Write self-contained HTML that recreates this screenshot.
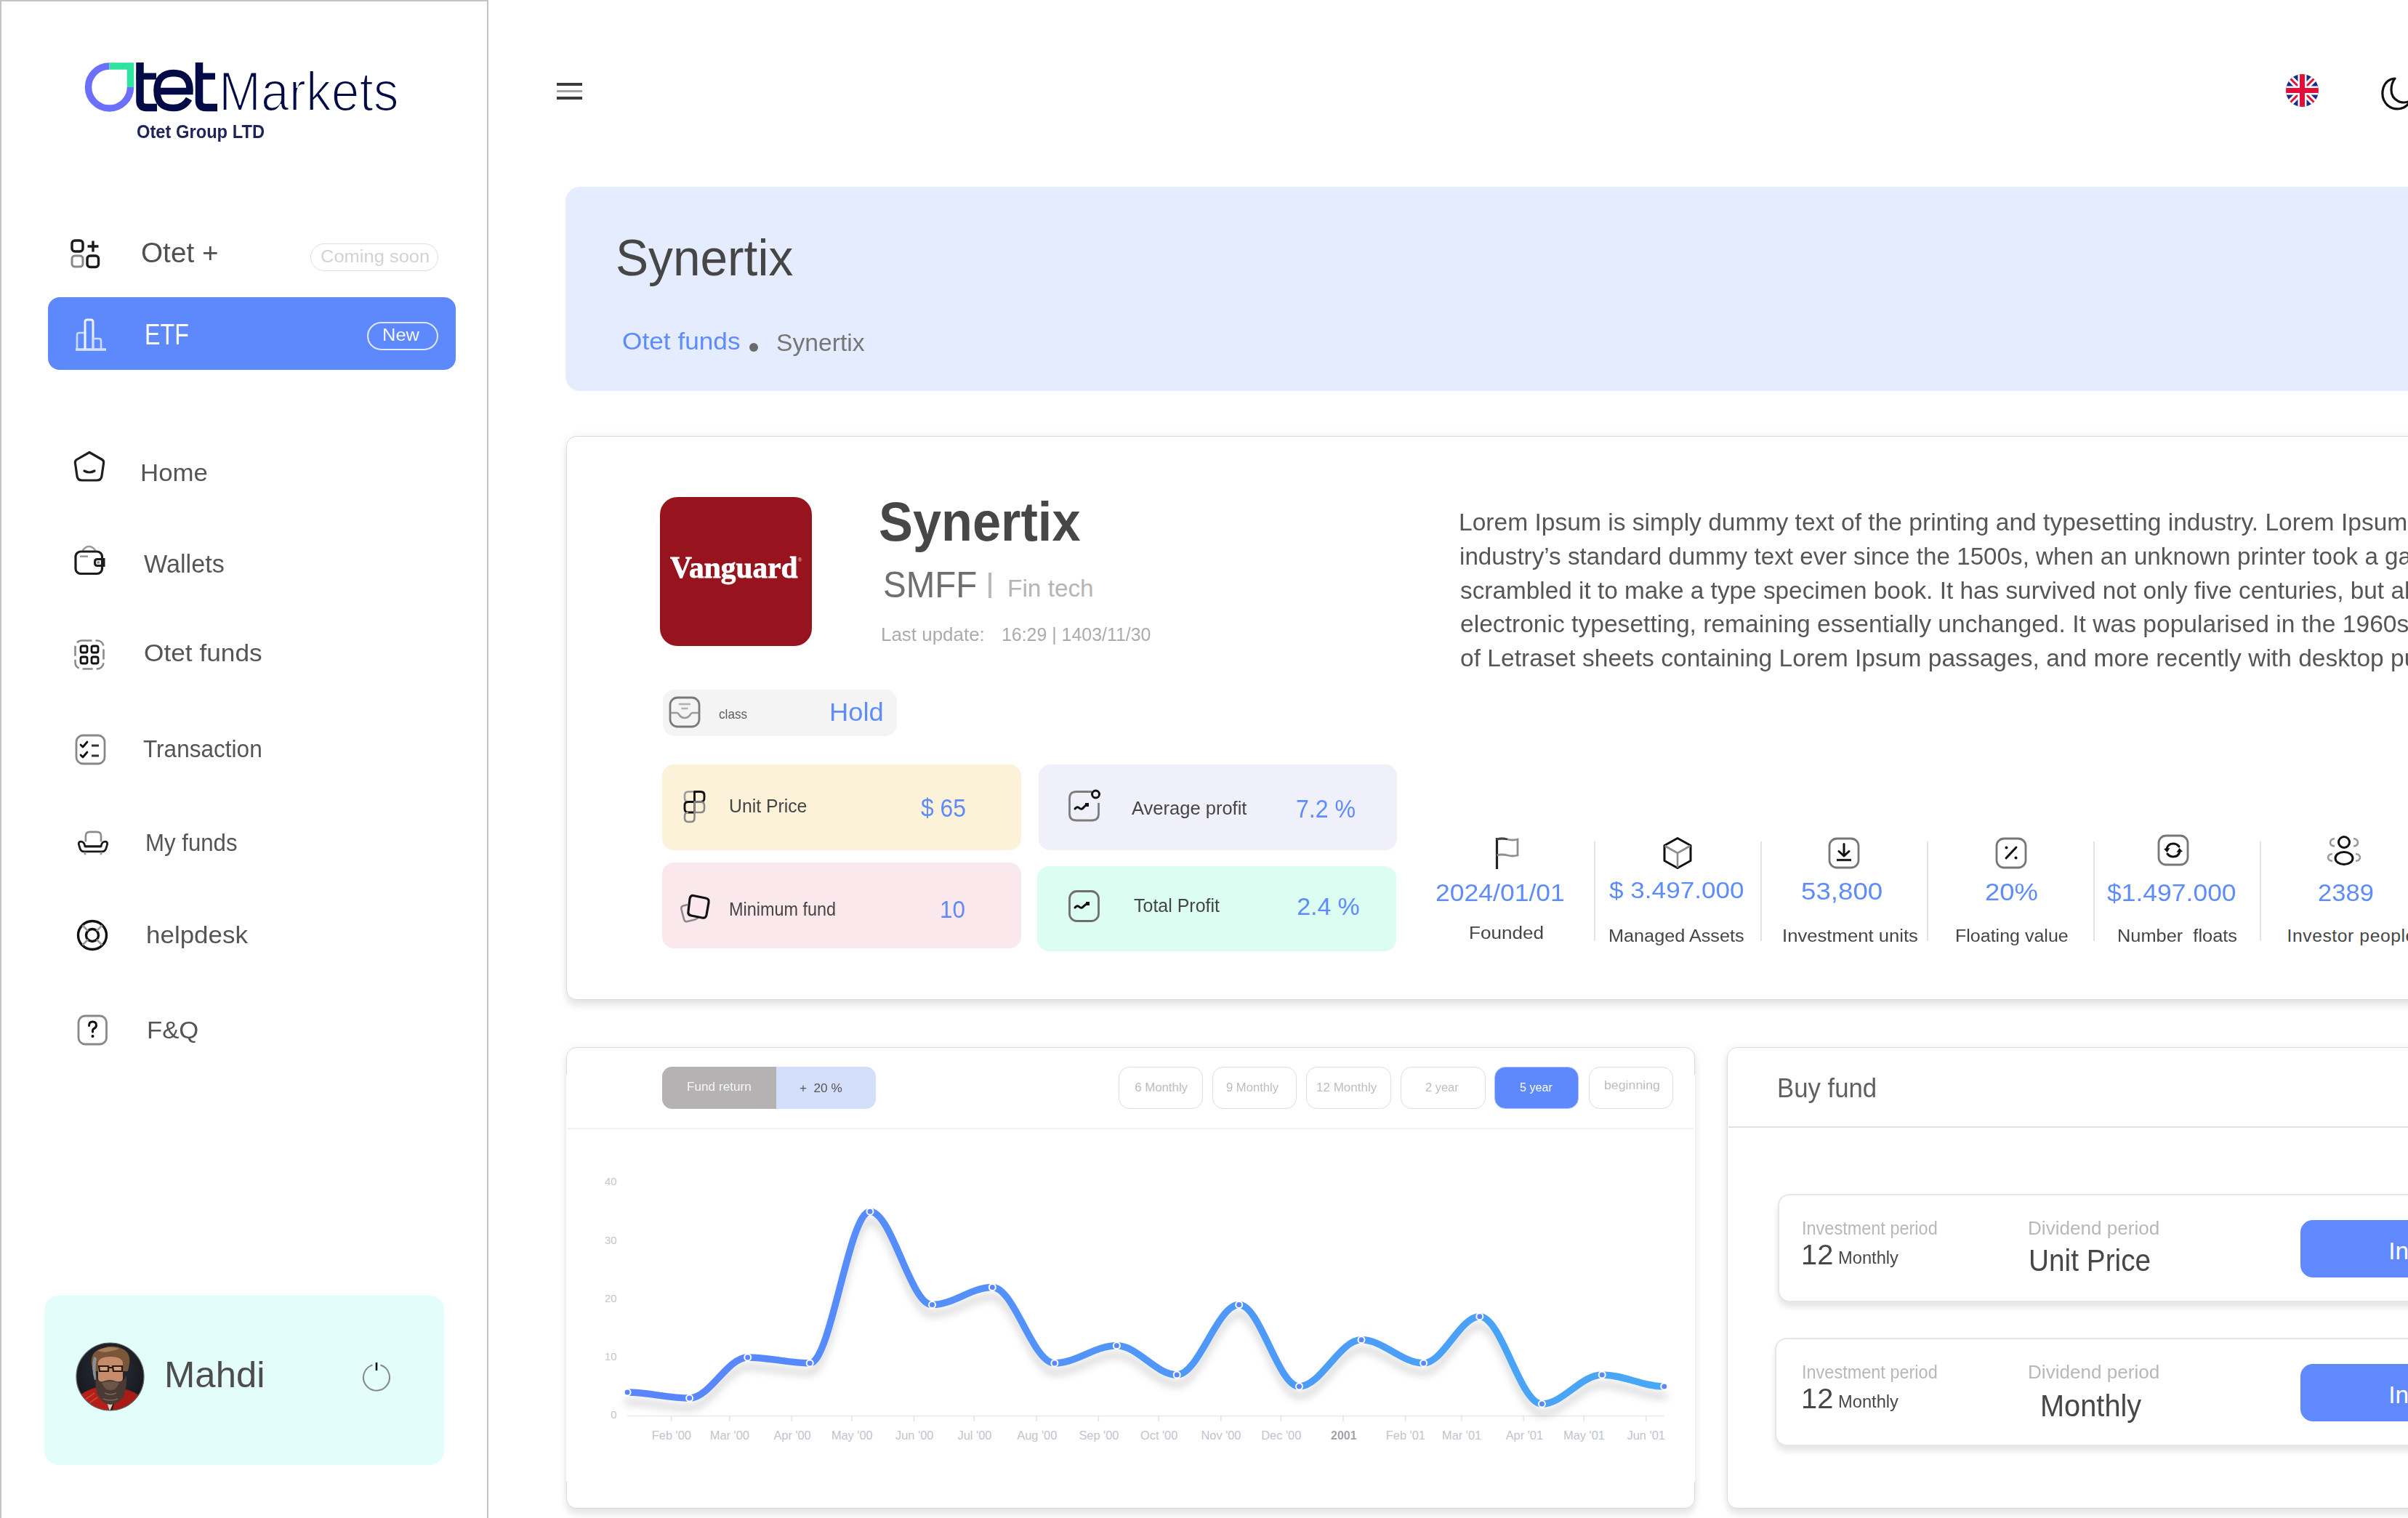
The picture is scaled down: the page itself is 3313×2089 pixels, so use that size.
<!DOCTYPE html>
<html><head><meta charset="utf-8"><style>
html{margin:0;padding:0;overflow:hidden;width:3313px;height:2089px;background:#fff}body{margin:0;padding:0;}
body{width:3313px;height:2089px;overflow:hidden;position:relative;background:#fff;font-family:'Liberation Sans',sans-serif;}
.t{position:absolute;white-space:nowrap;line-height:1;transform-origin:0 0;}
svg{overflow:visible}
</style></head><body><div id="root" style="position:absolute;left:0;top:0;width:3313px;height:2089px;overflow:hidden;background:#fff">
<div style="position:absolute;left:0px;top:0px;width:672px;height:2089px;border:2px solid #c4c4c4;border-bottom:none;box-sizing:border-box;background:#fff"></div>
<svg style="position:absolute;left:110px;top:80px;" width="80" height="80" viewBox="0 0 80 80" fill="none">
<path d="M40.5 11 A29 29 0 1 0 69.5 40" stroke="#6b6ffb" stroke-width="9.5"/>
<path d="M40.5 11 H69.5 V40" stroke="#2ee3a0" stroke-width="9.5" stroke-linejoin="miter"/>
</svg>
<svg style="position:absolute;left:185px;top:84px;" width="116" height="72" viewBox="0 0 116 72" fill="none">
<path d="M7.5 2 V55 Q7.5 64 16.5 64 H31" stroke="#020b45" stroke-width="10.5"/>
<path d="M2.5 21 H30" stroke="#020b45" stroke-width="9"/>
<path d="M31 41.5 H76 Q77 17 54 16.5 Q31 17 31 40.5 Q31 65 54 64.5 Q68 64.5 75 52" stroke="#020b45" stroke-width="9.5"/>
<path d="M89 2 V55 Q89 64 98 64 H114" stroke="#020b45" stroke-width="10.5"/>
<path d="M84 21 H111" stroke="#020b45" stroke-width="9"/>
</svg>
<div class="t" style="left:301.4px;top:88.9px;font-size:75.36px;color:#020b45;font-weight:400;font-family:'Liberation Sans',sans-serif;transform:scaleX(0.9238);-webkit-text-stroke:2.2px #fff;">Markets</div>
<div class="t" style="left:188.1px;top:168.9px;font-size:25.36px;color:#1e2458;font-weight:700;font-family:'Liberation Sans',sans-serif;transform:scaleX(0.9347);">Otet Group LTD</div>
<div class="t" style="left:194.1px;top:329.2px;font-size:38.41px;color:#505050;font-weight:400;font-family:'Liberation Sans',sans-serif;transform:scaleX(1.0082);">Otet +</div>
<div style="position:absolute;left:427px;top:335px;width:176px;height:38px;border:1.5px solid #dedede;border-radius:19px;box-sizing:border-box"></div>
<div class="t" style="left:441.2px;top:341.8px;font-size:23.48px;color:#d2d2d2;font-weight:400;font-family:'Liberation Sans',sans-serif;transform:scaleX(1.0862);">Coming soon</div>
<svg style="position:absolute;left:96px;top:328px;" width="44" height="44" viewBox="0 0 44 44" fill="none">
<rect x="3" y="3" width="15" height="15" rx="4" stroke="#1a1a1a" stroke-width="3.4"/>
<path d="M32 3.5 V18.5 M24.5 11 H39.5" stroke="#1a1a1a" stroke-width="3.4"/>
<rect x="3" y="24" width="15" height="15" rx="4" stroke="#888" stroke-width="3"/>
<rect x="24" y="24" width="15.5" height="15.5" rx="4" stroke="#1a1a1a" stroke-width="3.4"/>
</svg>
<div style="position:absolute;left:66px;top:409px;width:561px;height:100px;background:#5e89fd;border-radius:16px"></div>
<svg style="position:absolute;left:100px;top:437px;" width="48" height="48" viewBox="0 0 48 48" fill="none">
<path d="M4 44 H46" stroke="#d9e3ff" stroke-width="3.4"/>
<path d="M6 44 V24 Q6 21 9 21 H17 V44" stroke="#cdd9fd" stroke-width="2.6"/>
<path d="M17 44 V6 Q17 3 20 3 H25 Q28 3 28 6 V44" stroke="#eef2ff" stroke-width="3"/>
<path d="M28 44 V29 H36 Q39 29 39 32 V44" stroke="#cdd9fd" stroke-width="2.6"/>
</svg>
<div class="t" style="left:199.4px;top:440.6px;font-size:39.86px;color:#ffffff;font-weight:400;font-family:'Liberation Sans',sans-serif;transform:scaleX(0.8080);">ETF</div>
<div style="position:absolute;left:505px;top:443px;width:98px;height:39px;border:2px solid #dfe7ff;border-radius:20px;box-sizing:border-box"></div>
<div class="t" style="left:526.4px;top:449.1px;font-size:24.64px;color:#f4f7ff;font-weight:400;font-family:'Liberation Sans',sans-serif;transform:scaleX(1.0337);">New</div>
<div class="t" style="left:192.7px;top:633.4px;font-size:34.06px;color:#555555;font-weight:400;font-family:'Liberation Sans',sans-serif;transform:scaleX(1.0230);">Home</div>
<div class="t" style="left:198.0px;top:758.2px;font-size:35.07px;color:#555555;font-weight:400;font-family:'Liberation Sans',sans-serif;transform:scaleX(0.9748);">Wallets</div>
<div class="t" style="left:197.8px;top:882.1px;font-size:33.62px;color:#555555;font-weight:400;font-family:'Liberation Sans',sans-serif;transform:scaleX(1.0488);">Otet funds</div>
<div class="t" style="left:197.4px;top:1014.0px;font-size:33.62px;color:#555555;font-weight:400;font-family:'Liberation Sans',sans-serif;transform:scaleX(0.9389);">Transaction</div>
<div class="t" style="left:200.2px;top:1143.3px;font-size:33.77px;color:#555555;font-weight:400;font-family:'Liberation Sans',sans-serif;transform:scaleX(0.9237);">My funds</div>
<div class="t" style="left:200.6px;top:1270.3px;font-size:33.77px;color:#555555;font-weight:400;font-family:'Liberation Sans',sans-serif;transform:scaleX(1.0354);">helpdesk</div>
<div class="t" style="left:202.2px;top:1401.3px;font-size:33.77px;color:#555555;font-weight:400;font-family:'Liberation Sans',sans-serif;transform:scaleX(1.0280);">F&amp;Q</div>
<svg style="position:absolute;left:100px;top:619px;" width="46" height="46" viewBox="0 0 46 46" fill="none">
<path d="M23 3.5 L40.5 13.5 Q43 15 42.6 18 L40 36 Q39.3 42 33 42 H13 Q6.7 42 6 36 L3.4 18 Q3 15 5.5 13.5 Z" stroke="#1f1f1f" stroke-width="3.2" stroke-linejoin="round"/>
<path d="M16 29 Q23 33 30 29" stroke="#1f1f1f" stroke-width="3.2" stroke-linecap="round"/>
</svg>
<svg style="position:absolute;left:100px;top:748px;" width="46" height="46" viewBox="0 0 46 46" fill="none">
<path d="M13.6 9.5 Q22.5 -1.5 31.4 9.5" stroke="#9a9a9a" stroke-width="2.6"/>
<rect x="4" y="11" width="36.5" height="30.5" rx="7" stroke="#1c1c1c" stroke-width="3.2"/>
<path d="M43 21.5 H34 Q30.5 21.5 30.5 25 V27 Q30.5 30.5 34 30.5 H43 Z" stroke="#1c1c1c" stroke-width="3"/>
<path d="M10 17.7 H21" stroke="#999" stroke-width="2.6"/>
<rect x="33.3" y="24.4" width="3.7" height="3.2" fill="#888"/>
</svg>
<svg style="position:absolute;left:100px;top:878px;" width="46" height="46" viewBox="0 0 46 46" fill="none">
<rect x="3.5" y="3.5" width="39" height="39" rx="9" stroke="#8a8a8a" stroke-width="2.6" stroke-dasharray="14 5 14 5"/>
<rect x="11" y="11" width="9" height="9" rx="2.2" stroke="#111" stroke-width="2.8"/>
<rect x="26" y="11" width="9" height="9" rx="2.2" stroke="#111" stroke-width="2.8"/>
<rect x="11" y="26" width="9" height="9" rx="2.2" stroke="#111" stroke-width="2.8"/>
<rect x="26" y="26" width="9" height="9" rx="2.2" stroke="#111" stroke-width="2.8"/>
</svg>
<svg style="position:absolute;left:102px;top:1009px;" width="46" height="46" viewBox="0 0 46 46" fill="none">
<rect x="3" y="3" width="39" height="39" rx="9" stroke="#888" stroke-width="2.8"/>
<path d="M9 16 L12 19 L18 12" stroke="#111" stroke-width="2.8" stroke-linecap="round" stroke-linejoin="round"/>
<path d="M9 30 L12 33 L18 26" stroke="#111" stroke-width="2.8" stroke-linecap="round" stroke-linejoin="round"/>
<path d="M24 17 H34 M24 31 H34" stroke="#333" stroke-width="3.2"/>
</svg>
<svg style="position:absolute;left:104px;top:1140px;" width="48" height="42" viewBox="0 0 48 42" fill="none"><g transform="translate(1.9,2) scale(0.92,0.95)">
<path d="M13 17 V9 Q13 3 19 3 H30 Q36 3 36 9 V17" stroke="#8a8a8a" stroke-width="2.8"/>
<path d="M12 24 Q11 17 5.5 17 Q2 17 2.8 21.5 L4.5 27 Q6 31 10 31.5 H38 Q42 31 43.5 27 L45.2 21.5 Q46 17 42.5 17 Q37 17 36 24 Z" stroke="#1a1a1a" stroke-width="3" stroke-linejoin="round"/>
<path d="M12 24 H36" stroke="#1a1a1a" stroke-width="3"/>
<path d="M12 32 V36 M36 32 V36" stroke="#999" stroke-width="3"/>
</g></svg>
<svg style="position:absolute;left:104px;top:1264px;" width="46" height="46" viewBox="0 0 46 46" fill="none">
<circle cx="23" cy="23" r="19.5" stroke="#111" stroke-width="3.4"/>
<circle cx="23" cy="23" r="8.5" stroke="#111" stroke-width="3.4"/>
<path d="M9.5 9.5 L17 17 M36.5 9.5 L29 17 M9.5 36.5 L17 29 M36.5 36.5 L29 29" stroke="#999" stroke-width="2.6"/>
</svg>
<svg style="position:absolute;left:105px;top:1395px;" width="46" height="46" viewBox="0 0 46 46" fill="none">
<rect x="3" y="3" width="38.5" height="39" rx="9" stroke="#888" stroke-width="2.8"/>
<path d="M17.5 16.5 Q17.5 11 22.5 11 Q27.5 11 27.5 16 Q27.5 19.5 23.5 21 Q22.5 21.6 22.5 23.5 V25" stroke="#111" stroke-width="3" stroke-linecap="round"/>
<circle cx="22.5" cy="31" r="2" fill="#111"/>
</svg>
<div style="position:absolute;left:61px;top:1783px;width:550px;height:233px;background:#e2fdfa;border-radius:20px"></div>
<svg style="position:absolute;left:104px;top:1847px;" width="95" height="95" viewBox="0 0 95 95" fill="none">
<defs><clipPath id="av"><circle cx="47.5" cy="47.5" r="46.5"/></clipPath>
<radialGradient id="bg" cx="0.5" cy="0.4" r="0.6"><stop offset="0" stop-color="#2b2f38"/><stop offset="1" stop-color="#14171d"/></radialGradient></defs>
<g clip-path="url(#av)">
<rect width="95" height="95" fill="url(#bg)"/>
<path d="M0 95 L0 80 Q10 66 30 62 L40 72 L47 95 Z" fill="#b3201a"/>
<path d="M95 95 L95 82 Q86 68 66 64 L56 74 L50 95 Z" fill="#a81c18"/>
<path d="M6 84 L26 70 M10 90 L30 76" stroke="#e05a40" stroke-width="2" opacity="0.6"/>
<path d="M40 74 L47 95 L55 76 Z" fill="#d9cfc8"/>
<path d="M22 30 Q20 12 38 8 Q52 3 64 9 Q76 14 74 30 L72 40 L24 40 Z" fill="#7a5638"/>
<path d="M30 12 Q45 4 60 9 Q52 12 40 14 Z" fill="#a77d58"/>
<path d="M25 20 Q21 35 26 52 L29 52 Q26 36 29 22 Z" fill="#8c9096"/>
<path d="M31 28 Q33 20 48 20 Q63 20 65 28 L65 50 Q64 58 48 58 Q32 58 31 50 Z" fill="#c48c6a"/>
<path d="M32 33 H45 V40 H33 Z M51 33 H64 V40 H52 Z" stroke="#2a1a12" stroke-width="2.2" fill="#d6a07c"/>
<path d="M45 35 H51" stroke="#2a1a12" stroke-width="2"/>
<path d="M28 46 Q30 56 38 54 Q47 50 56 54 Q66 56 70 46 Q71 62 66 74 Q58 86 48 86 Q38 86 31 74 Q26 62 28 46 Z" fill="#4a3a33"/>
<path d="M36 56 Q47 52 60 56 Q56 66 48 66 Q40 66 36 56 Z" fill="#6b5548"/>
<path d="M40 70 Q48 74 56 70 M38 78 Q48 82 58 78" stroke="#7a6658" stroke-width="1.5" fill="none"/>
</g>
<circle cx="47.5" cy="47.5" r="46.5" stroke="#666" stroke-width="1.2"/>
</svg>
<div class="t" style="left:226.4px;top:1867.3px;font-size:50.29px;color:#4d4d4d;font-weight:400;font-family:'Liberation Sans',sans-serif;transform:scaleX(1.0112);">Mahdi</div>
<svg style="position:absolute;left:494px;top:1871px;" width="48" height="48" viewBox="0 0 48 48" fill="none">
<path d="M18.5 7.5 A18 18 0 1 0 29.5 7.5" stroke="#858a8a" stroke-width="2"/>
<path d="M24 4 V15" stroke="#111" stroke-width="2.6"/>
</svg>
<div style="position:absolute;left:766px;top:114px;width:35px;height:3.5px;background:#3a3a3a"></div>
<div style="position:absolute;left:766px;top:123.5px;width:35px;height:3.5px;background:#a3a3a3"></div>
<div style="position:absolute;left:766px;top:133px;width:35px;height:3.5px;background:#3a3a3a"></div>
<svg style="position:absolute;left:3144px;top:101px;" width="47" height="47" viewBox="0 0 47 47" fill="none">
<defs><clipPath id="fl"><circle cx="23.5" cy="23.5" r="22.5"/></clipPath></defs>
<g clip-path="url(#fl)">
<rect width="47" height="47" fill="#1c2a8c"/>
<path d="M0 0 L47 47 M47 0 L0 47" stroke="#fff" stroke-width="9"/>
<path d="M0 0 L47 47 M47 0 L0 47" stroke="#e0103a" stroke-width="3"/>
<path d="M23.5 0 V47 M0 23.5 H47" stroke="#fff" stroke-width="12"/>
<path d="M23.5 0 V47 M0 23.5 H47" stroke="#e0103a" stroke-width="7"/>
</g></svg>
<svg style="position:absolute;left:3271px;top:103px;" width="43" height="52" viewBox="0 0 43 52" fill="none">
<path d="M24 5 Q12 6 8 18 Q4 32 14 42 Q24 50 36 45 Q42 42 45 36 Q36 40 28 36 Q19 31 19 21 Q19 11 24 5 Z" stroke="#111" stroke-width="3.2" stroke-linejoin="round"/>
</svg>
<div style="position:absolute;left:778px;top:257px;width:2535px;height:281px;background:#e5ecfd;border-radius:20px 0 0 20px"></div>
<div class="t" style="left:846.6px;top:321.2px;font-size:69.86px;color:#464646;font-weight:400;font-family:'Liberation Sans',sans-serif;transform:scaleX(0.9678);">Synertix</div>
<div class="t" style="left:856.2px;top:453.3px;font-size:33.77px;color:#5d8cfb;font-weight:400;font-family:'Liberation Sans',sans-serif;transform:scaleX(1.0437);">Otet funds</div>
<div style="position:absolute;left:1030.5px;top:471.7px;width:12px;height:12px;border-radius:50%;background:#6b6b6b"></div>
<div class="t" style="left:1068.3px;top:456.0px;font-size:32.46px;color:#767676;font-weight:400;font-family:'Liberation Sans',sans-serif;transform:scaleX(1.0378);">Synertix</div>
<div style="position:absolute;left:779px;top:600px;width:2621px;height:776px;border:1.5px solid #dcdcdc;border-radius:14px;background:#fff;box-shadow:0 0 14px rgba(0,0,0,0.06),0 9px 10px rgba(0,0,0,0.08);box-sizing:border-box"></div>
<div style="position:absolute;left:908px;top:684px;width:209px;height:205px;background:#97141f;border-radius:24px"></div>
<div class="t" style="left:921.6px;top:759.7px;font-size:42.62px;color:#fff;font-weight:700;font-family:'Liberation Serif',serif;transform:scaleX(0.9708);-webkit-text-stroke:0.8px #fff;">Vanguard</div>
<div class="t" style="left:1097.9px;top:767.0px;font-size:7.00px;color:#f3dcdc;font-weight:400;font-family:'Liberation Sans',sans-serif;">®</div>
<div class="t" style="left:1208.9px;top:679.5px;font-size:76.67px;color:#474747;font-weight:700;font-family:'Liberation Sans',sans-serif;transform:scaleX(0.9174);">Synertix</div>
<div class="t" style="left:1214.6px;top:780.6px;font-size:49.86px;color:#6f6f6f;font-weight:400;font-family:'Liberation Sans',sans-serif;transform:scaleX(0.9518);">SMFF</div>
<div style="position:absolute;left:1360px;top:788px;width:4px;height:35px;background:#b9b9b9"></div>
<div class="t" style="left:1386.1px;top:792.6px;font-size:33.33px;color:#b5b5b5;font-weight:400;font-family:'Liberation Sans',sans-serif;">Fin tech</div>
<div class="t" style="left:1212.3px;top:859.8px;font-size:26.09px;color:#ababab;font-weight:400;font-family:'Liberation Sans',sans-serif;transform:scaleX(0.9949);">Last update:</div>
<div class="t" style="left:1378.0px;top:859.8px;font-size:26.09px;color:#ababab;font-weight:400;font-family:'Liberation Sans',sans-serif;transform:scaleX(0.9548);">16:29 | 1403/11/30</div>
<div style="position:absolute;left:912px;top:949px;width:322px;height:64px;background:#f4f4f4;border-radius:16px"></div>
<svg style="position:absolute;left:919px;top:957px;" width="46" height="46" viewBox="0 0 46 46" fill="none">
<rect x="3" y="3" width="40" height="40" rx="10" stroke="#7a7a7a" stroke-width="2.8"/>
<path d="M3.5 24 H12 Q14 24 15 26 Q18 31 23 31 Q28 31 31 26 Q32 24 34 24 H42.5" stroke="#9a9a9a" stroke-width="2.6"/>
<path d="M15 12 H31 M18.5 18 H27.5" stroke="#b0b0b0" stroke-width="2.6"/>
</svg>
<div class="t" style="left:988.9px;top:974.0px;font-size:18.50px;color:#5e5e5e;font-weight:400;font-family:'Liberation Sans',sans-serif;transform:scaleX(0.9287);">class</div>
<div class="t" style="left:1140.7px;top:962.0px;font-size:35.07px;color:#5e8cfb;font-weight:400;font-family:'Liberation Sans',sans-serif;transform:scaleX(1.0360);">Hold</div>
<div style="position:absolute;left:911px;top:1052px;width:494px;height:118px;background:#fcf1d9;border-radius:16px"></div>
<div style="position:absolute;left:1429px;top:1052px;width:493px;height:118px;background:#f0f0fa;border-radius:16px"></div>
<div style="position:absolute;left:911px;top:1187px;width:494px;height:118px;background:#fae8ec;border-radius:16px"></div>
<div style="position:absolute;left:1427px;top:1192px;width:494px;height:117px;background:#dcfdf2;border-radius:16px"></div>
<div class="t" style="left:1002.7px;top:1096.7px;font-size:25.94px;color:#454545;font-weight:400;font-family:'Liberation Sans',sans-serif;transform:scaleX(0.9550);">Unit Price</div>
<div class="t" style="left:1266.7px;top:1095.4px;font-size:34.35px;color:#5e8cfb;font-weight:400;font-family:'Liberation Sans',sans-serif;transform:scaleX(0.9286);">$ 65</div>
<div class="t" style="left:1556.5px;top:1098.8px;font-size:26.09px;color:#454545;font-weight:400;font-family:'Liberation Sans',sans-serif;transform:scaleX(0.9787);">Average profit</div>
<div class="t" style="left:1783.4px;top:1095.6px;font-size:34.49px;color:#5e8cfb;font-weight:400;font-family:'Liberation Sans',sans-serif;transform:scaleX(0.9320);">7.2 %</div>
<div class="t" style="left:1002.8px;top:1238.6px;font-size:25.07px;color:#454545;font-weight:400;font-family:'Liberation Sans',sans-serif;transform:scaleX(0.9343);">Minimum fund</div>
<div class="t" style="left:1292.5px;top:1235.1px;font-size:33.77px;color:#5e8cfb;font-weight:400;font-family:'Liberation Sans',sans-serif;transform:scaleX(0.9328);">10</div>
<div class="t" style="left:1559.5px;top:1234.1px;font-size:25.80px;color:#454545;font-weight:400;font-family:'Liberation Sans',sans-serif;transform:scaleX(0.9683);">Total Profit</div>
<div class="t" style="left:1784.3px;top:1231.1px;font-size:33.77px;color:#5e8cfb;font-weight:400;font-family:'Liberation Sans',sans-serif;">2.4 %</div>
<svg style="position:absolute;left:938px;top:1086px;" width="36" height="50" viewBox="0 0 36 50" fill="none">
<path d="M17.5 3.5 H9 Q4 3.5 4 8.5 V12.5 Q4 17.5 9 17.5 H17.5 Z" stroke="#9a9a9a" stroke-width="2.6" stroke-linejoin="round"/>
<path d="M17.5 3.5 H26 Q31 3.5 31 8.5 V12.5 Q31 17.5 26 17.5 H17.5 Z" stroke="#111" stroke-width="2.8" stroke-linejoin="round"/>
<path d="M17.5 17.5 H9 Q4 17.5 4 22.5 V27 Q4 32 9 32 H17.5 Z" stroke="#111" stroke-width="2.8" stroke-linejoin="round"/>
<path d="M17.5 17.5 H26 Q31 17.5 31 22.5 V27 Q31 32 26 32 H17.5 Z" stroke="#8a8a8a" stroke-width="2.6" stroke-linejoin="round"/>
<path d="M17.5 32 V40 Q17.5 45 12.5 45 H9 Q4 45 4 40 V37 Q4 32 9 32" stroke="#8a8a8a" stroke-width="2.6" stroke-linejoin="round"/>
</svg>
<svg style="position:absolute;left:1468px;top:1085px;" width="48" height="48" viewBox="0 0 48 48" fill="none">
<path d="M34 4.5 H13 Q3.5 4.5 3.5 14 V35 Q3.5 44 13 44 H34 Q43.5 44 43.5 35 V20" stroke="#7d7d7d" stroke-width="2.8"/>
<circle cx="39.5" cy="8" r="5" stroke="#111" stroke-width="3"/>
<path d="M11 28 Q14 24 17 27 Q20 30 23 26 L27 22" stroke="#111" stroke-width="3" stroke-linecap="round"/>
<rect x="25" y="20" width="5" height="5" fill="#111"/>
</svg>
<svg style="position:absolute;left:934px;top:1228px;" width="48" height="48" viewBox="0 0 48 48" fill="none">
<path d="M12 17 L6 18.5 Q2.5 19.5 3.5 23.5 L7 37 Q8 41 12 40 L22 37.5 Q26 36.5 27 33" stroke="#8a8a8a" stroke-width="2.6"/>
<path d="M20 4.5 L37 8 Q42 9 41 14 L38 31 Q37 36 32 35 L17 32 Q12 31 13 26 L15 9 Q16 4 20 4.5 Z" stroke="#111" stroke-width="3.2"/>
</svg>
<svg style="position:absolute;left:1468px;top:1223px;" width="48" height="48" viewBox="0 0 48 48" fill="none">
<rect x="3.5" y="3.5" width="40" height="41" rx="10" stroke="#6f6f6f" stroke-width="2.8"/>
<path d="M11 26 Q14 22 17 25 Q20 28 23 24 L28 20" stroke="#111" stroke-width="3" stroke-linecap="round"/>
<rect x="26" y="18" width="5" height="5" fill="#111"/>
</svg>
<div class="t" style="left:2007.3px;top:702.4px;font-size:33.77px;color:#565656;transform:scaleX(0.9941)">Lorem Ipsum is simply dummy text of the printing and typesetting industry. Lorem Ipsum has been the</div>
<div class="t" style="left:2007.7px;top:749.0px;font-size:33.77px;color:#565656;transform:scaleX(0.9835)">industry’s standard dummy text ever since the 1500s, when an unknown printer took a galley of type and</div>
<div class="t" style="left:2009.0px;top:795.6px;font-size:33.77px;color:#565656;transform:scaleX(0.9873)">scrambled it to make a type specimen book. It has survived not only five centuries, but also the leap into</div>
<div class="t" style="left:2008.7px;top:842.2px;font-size:33.77px;color:#565656;transform:scaleX(0.9949)">electronic typesetting, remaining essentially unchanged. It was popularised in the 1960s with the release</div>
<div class="t" style="left:2008.7px;top:888.8px;font-size:33.77px;color:#565656;transform:scaleX(0.9942)">of Letraset sheets containing Lorem Ipsum passages, and more recently with desktop publishing software like</div>
<div style="position:absolute;left:2193px;top:1158px;width:2px;height:137px;background:#e3e3e3"></div>
<div style="position:absolute;left:2422px;top:1158px;width:2px;height:137px;background:#e3e3e3"></div>
<div style="position:absolute;left:2651px;top:1158px;width:2px;height:137px;background:#e3e3e3"></div>
<div style="position:absolute;left:2880px;top:1158px;width:2px;height:137px;background:#e3e3e3"></div>
<div style="position:absolute;left:3109px;top:1158px;width:2px;height:137px;background:#e3e3e3"></div>
<div class="t" style="left:1974.9px;top:1211.7px;font-size:33.19px;color:#5e8cfb;font-weight:400;font-family:'Liberation Sans',sans-serif;transform:scaleX(1.0715);">2024/01/01</div>
<div class="t" style="left:2021.4px;top:1272.7px;font-size:23.62px;color:#454545;font-weight:400;font-family:'Liberation Sans',sans-serif;transform:scaleX(1.1062);">Founded</div>
<div class="t" style="left:2214.0px;top:1209.7px;font-size:31.16px;color:#5e8cfb;font-weight:400;font-family:'Liberation Sans',sans-serif;transform:scaleX(1.1275);">$ 3.497.000</div>
<div class="t" style="left:2213.4px;top:1276.1px;font-size:24.49px;color:#454545;font-weight:400;font-family:'Liberation Sans',sans-serif;transform:scaleX(1.0311);">Managed Assets</div>
<div class="t" style="left:2477.5px;top:1209.9px;font-size:33.77px;color:#5e8cfb;font-weight:400;font-family:'Liberation Sans',sans-serif;transform:scaleX(1.0872);">53,800</div>
<div class="t" style="left:2452.0px;top:1276.2px;font-size:23.77px;color:#454545;font-weight:400;font-family:'Liberation Sans',sans-serif;transform:scaleX(1.0804);">Investment units</div>
<div class="t" style="left:2731.2px;top:1211.4px;font-size:33.19px;color:#5e8cfb;font-weight:400;font-family:'Liberation Sans',sans-serif;transform:scaleX(1.0995);">20%</div>
<div class="t" style="left:2690.0px;top:1276.2px;font-size:23.77px;color:#454545;font-weight:400;font-family:'Liberation Sans',sans-serif;transform:scaleX(1.0525);">Floating value</div>
<div class="t" style="left:2898.6px;top:1212.7px;font-size:32.61px;color:#5e8cfb;font-weight:400;font-family:'Liberation Sans',sans-serif;transform:scaleX(1.0882);">$1.497.000</div>
<div class="t" style="left:2913.0px;top:1276.1px;font-size:24.64px;color:#454545;font-weight:400;font-family:'Liberation Sans',sans-serif;transform:scaleX(1.0306);">Number&nbsp; floats</div>
<div class="t" style="left:3189.3px;top:1212.1px;font-size:33.33px;color:#5e8cfb;font-weight:400;font-family:'Liberation Sans',sans-serif;transform:scaleX(1.0366);">2389</div>
<div class="t" style="left:3146.5px;top:1276.1px;font-size:24.64px;color:#454545;font-weight:400;font-family:'Liberation Sans',sans-serif;letter-spacing:0.6px;">Investor people</div>
<svg style="position:absolute;left:2050px;top:1150px;" width="44" height="48" viewBox="0 0 44 48" fill="none">
<path d="M9.5 3 V46" stroke="#222" stroke-width="3.2"/>
<path d="M9.5 5 Q16 3 24 5 Q31 7 38 5 V27 Q31 29 24 27 Q16 25 9.5 27" stroke="#8e8e8e" stroke-width="2.8"/>
<path d="M9.5 5 Q16 3 24 5" stroke="#444" stroke-width="2.8"/>
</svg>
<svg style="position:absolute;left:2284px;top:1150px;" width="48" height="48" viewBox="0 0 48 48" fill="none">
<path d="M24 3.5 L42 13.5 V34.5 L24 44.5 L6 34.5 V13.5 Z" stroke="#111" stroke-width="3" stroke-linejoin="round"/>
<path d="M6.5 14 L24 24 L41.5 14 M24 24 V44" stroke="#8e8e8e" stroke-width="2.6"/>
</svg>
<svg style="position:absolute;left:2514px;top:1151px;" width="46" height="46" viewBox="0 0 46 46" fill="none">
<rect x="3" y="3" width="40" height="40" rx="10" stroke="#777" stroke-width="2.8"/>
<path d="M23 10.5 V27 M16 20.5 L23 27 L30 20.5" stroke="#111" stroke-width="3" stroke-linecap="round" stroke-linejoin="round"/>
<path d="M13 32.5 H33" stroke="#222" stroke-width="3.2"/>
</svg>
<svg style="position:absolute;left:2744px;top:1151px;" width="46" height="46" viewBox="0 0 46 46" fill="none">
<rect x="3" y="3" width="40" height="40" rx="10" stroke="#777" stroke-width="2.8"/>
<path d="M30 15 L16 30" stroke="#111" stroke-width="3" stroke-linecap="round"/>
<circle cx="16.5" cy="15.5" r="2" fill="#111"/><circle cx="29.5" cy="29.5" r="2" fill="#111"/>
</svg>
<svg style="position:absolute;left:2967px;top:1147px;" width="46" height="46" viewBox="0 0 46 46" fill="none">
<rect x="3" y="3" width="40" height="40" rx="10" stroke="#777" stroke-width="2.8"/>
<path d="M14 21 Q16 14 23 14 Q28 14 31 18 M32 25 Q30 32 23 32 Q18 32 15 28" stroke="#111" stroke-width="3" stroke-linecap="round"/>
<path d="M10 21 L14.5 26 L18.5 20 Z M36 25 L31.5 20 L27.5 26 Z" fill="#111"/>
</svg>
<svg style="position:absolute;left:3200px;top:1148px;" width="50" height="46" viewBox="0 0 50 46" fill="none">
<ellipse cx="25" cy="11" rx="7.5" ry="7.5" stroke="#111" stroke-width="3"/>
<ellipse cx="25" cy="33" rx="12" ry="8.5" stroke="#111" stroke-width="3"/>
<path d="M12 6 Q6 7 6 11.5 Q6 16 12 16.5 M38 6 Q44 7 44 11.5 Q44 16 38 16.5 M9 27 Q3 28 3 32 Q3 36 9 37 M41 27 Q47 28 47 32 Q47 36 41 37" stroke="#9a9a9a" stroke-width="2.6"/>
</svg>
<div style="position:absolute;left:779px;top:1441px;width:1553px;height:635px;border:1.5px solid #dcdcdc;border-radius:14px;background:#fff;box-shadow:0 0 14px rgba(0,0,0,0.06),0 9px 10px rgba(0,0,0,0.08);box-sizing:border-box"></div>
<div style="position:absolute;left:779px;top:1478px;width:3px;height:561px;background:#fff"></div>
<div style="position:absolute;left:2329px;top:1479px;width:3px;height:560px;background:#fff"></div>
<div style="position:absolute;left:781px;top:1552px;width:1549px;height:2px;background:#eef1f6"></div>
<div style="position:absolute;left:911px;top:1468px;width:294px;height:58px;background:#d3defa;border-radius:14px;overflow:hidden"></div>
<div style="position:absolute;left:911px;top:1468px;width:157px;height:58px;background:#b4b2b3;border-radius:14px 0 0 14px"></div>
<div class="t" style="left:945.1px;top:1487.0px;font-size:16.23px;color:#f7f7f7;font-weight:400;font-family:'Liberation Sans',sans-serif;transform:scaleX(1.0591);">Fund return</div>
<div class="t" style="left:1100.3px;top:1489.7px;font-size:16.81px;color:#555;font-weight:400;font-family:'Liberation Sans',sans-serif;transform:scaleX(1.0217);">+&nbsp; 20 %</div>
<div style="position:absolute;left:1539px;top:1468px;width:116px;height:58px;border:1.5px solid #dedede;border-radius:15px;box-sizing:border-box"></div>
<div style="position:absolute;left:1668px;top:1468px;width:116px;height:58px;border:1.5px solid #dedede;border-radius:15px;box-sizing:border-box"></div>
<div style="position:absolute;left:1797px;top:1468px;width:117px;height:58px;border:1.5px solid #dedede;border-radius:15px;box-sizing:border-box"></div>
<div style="position:absolute;left:1927px;top:1468px;width:117px;height:58px;border:1.5px solid #dedede;border-radius:15px;box-sizing:border-box"></div>
<div style="position:absolute;left:2056px;top:1468px;width:116px;height:58px;background:#5e89fd;border-radius:15px;border:1.5px solid #a9c0fd;box-sizing:border-box"></div>
<div style="position:absolute;left:2186px;top:1468px;width:116px;height:58px;border:1.5px solid #dedede;border-radius:15px;box-sizing:border-box"></div>
<div class="t" style="left:1561.2px;top:1488.9px;font-size:16.81px;color:#bdbdbd;font-weight:400;font-family:'Liberation Sans',sans-serif;">6 Monthly</div>
<div class="t" style="left:1686.8px;top:1488.9px;font-size:16.81px;color:#bdbdbd;font-weight:400;font-family:'Liberation Sans',sans-serif;transform:scaleX(0.9900);">9 Monthly</div>
<div class="t" style="left:1811.1px;top:1488.9px;font-size:16.81px;color:#bdbdbd;font-weight:400;font-family:'Liberation Sans',sans-serif;transform:scaleX(1.0141);">12 Monthly</div>
<div class="t" style="left:1961.0px;top:1488.7px;font-size:16.81px;color:#bdbdbd;font-weight:400;font-family:'Liberation Sans',sans-serif;transform:scaleX(0.9797);">2 year</div>
<div class="t" style="left:2090.9px;top:1488.7px;font-size:16.81px;color:#ffffff;font-weight:400;font-family:'Liberation Sans',sans-serif;transform:scaleX(0.9631);">5 year</div>
<div class="t" style="left:2207.4px;top:1485.7px;font-size:16.81px;color:#bdbdbd;font-weight:400;font-family:'Liberation Sans',sans-serif;transform:scaleX(1.0568);">beginning</div>
<div class="t" style="left:832.0px;top:1619.2px;font-size:14.78px;color:#c6c6cc;font-weight:400;font-family:'Liberation Sans',sans-serif;">40</div>
<div class="t" style="left:832.0px;top:1699.7px;font-size:14.78px;color:#c6c6cc;font-weight:400;font-family:'Liberation Sans',sans-serif;">30</div>
<div class="t" style="left:832.0px;top:1779.9px;font-size:14.78px;color:#c6c6cc;font-weight:400;font-family:'Liberation Sans',sans-serif;">20</div>
<div class="t" style="left:832.0px;top:1860.4px;font-size:14.78px;color:#c6c6cc;font-weight:400;font-family:'Liberation Sans',sans-serif;">10</div>
<div class="t" style="left:840.3px;top:1940.2px;font-size:14.78px;color:#c6c6cc;font-weight:400;font-family:'Liberation Sans',sans-serif;">0</div>
<svg style="position:absolute;left:779px;top:1441px;" width="1553" height="635" viewBox="0 0 1553 635" fill="none">
<defs>
<linearGradient id="lg" x1="0" y1="0" x2="1" y2="0"><stop offset="0" stop-color="#5a84fd"/><stop offset="1" stop-color="#47a8f6"/></linearGradient>
<filter id="sh" x="-5%" y="-20%" width="110%" height="150%"><feDropShadow dx="0" dy="13" stdDeviation="5.5" flood-color="#000" flood-opacity="0.14"/></filter>
</defs>
<path d="M84 507.5 H1511" stroke="#ebebef" stroke-width="1.6"/>
<path d="M144.6 507 V515" stroke="#e3e3e3" stroke-width="1.5"/><path d="M224.7 507 V515" stroke="#e3e3e3" stroke-width="1.5"/><path d="M310.2 507 V515" stroke="#e3e3e3" stroke-width="1.5"/><path d="M393.0 507 V515" stroke="#e3e3e3" stroke-width="1.5"/><path d="M478.5 507 V515" stroke="#e3e3e3" stroke-width="1.5"/><path d="M561.3 507 V515" stroke="#e3e3e3" stroke-width="1.5"/><path d="M646.9 507 V515" stroke="#e3e3e3" stroke-width="1.5"/><path d="M732.4 507 V515" stroke="#e3e3e3" stroke-width="1.5"/><path d="M815.2 507 V515" stroke="#e3e3e3" stroke-width="1.5"/><path d="M900.7 507 V515" stroke="#e3e3e3" stroke-width="1.5"/><path d="M983.5 507 V515" stroke="#e3e3e3" stroke-width="1.5"/><path d="M1069.0 507 V515" stroke="#e3e3e3" stroke-width="1.5"/><path d="M1154.6 507 V515" stroke="#e3e3e3" stroke-width="1.5"/><path d="M1231.8 507 V515" stroke="#e3e3e3" stroke-width="1.5"/><path d="M1317.4 507 V515" stroke="#e3e3e3" stroke-width="1.5"/><path d="M1400.2 507 V515" stroke="#e3e3e3" stroke-width="1.5"/><path d="M1485.7 507 V515" stroke="#e3e3e3" stroke-width="1.5"/>
<path d="M84.1 475.1 C114.0 475.1 139.7 483.1 169.6 483.1 C197.6 483.1 221.7 426.9 249.7 426.9 C279.6 426.9 305.3 434.9 335.2 434.9 C364.2 434.9 389.0 226.2 418.0 226.2 C447.9 226.2 473.6 354.6 503.5 354.6 C532.5 354.6 557.3 330.5 586.3 330.5 C616.3 330.5 641.9 434.9 671.9 434.9 C701.8 434.9 727.5 410.8 757.4 410.8 C786.4 410.8 811.2 451.0 840.2 451.0 C870.1 451.0 895.8 354.6 925.7 354.6 C954.7 354.6 979.5 467.0 1008.5 467.0 C1038.4 467.0 1064.1 402.8 1094.0 402.8 C1124.0 402.8 1149.6 434.9 1179.6 434.9 C1206.6 434.9 1229.8 370.7 1256.8 370.7 C1286.8 370.7 1312.4 491.1 1342.4 491.1 C1371.4 491.1 1396.2 451.0 1425.2 451.0 C1455.1 451.0 1480.8 467.0 1510.7 467.0" stroke="url(#lg)" stroke-width="9.5" stroke-linecap="round" filter="url(#sh)"/>
<circle cx="84.1" cy="475.1" r="4.5" fill="#5b86fd" stroke="#fff" stroke-width="2"/><circle cx="169.6" cy="483.1" r="4.5" fill="#5b86fd" stroke="#fff" stroke-width="2"/><circle cx="249.7" cy="426.9" r="4.5" fill="#5b86fd" stroke="#fff" stroke-width="2"/><circle cx="335.2" cy="434.9" r="4.5" fill="#5b86fd" stroke="#fff" stroke-width="2"/><circle cx="418.0" cy="226.2" r="4.5" fill="#5b86fd" stroke="#fff" stroke-width="2"/><circle cx="503.5" cy="354.6" r="4.5" fill="#5b86fd" stroke="#fff" stroke-width="2"/><circle cx="586.3" cy="330.5" r="4.5" fill="#5b86fd" stroke="#fff" stroke-width="2"/><circle cx="671.9" cy="434.9" r="4.5" fill="#5b86fd" stroke="#fff" stroke-width="2"/><circle cx="757.4" cy="410.8" r="4.5" fill="#5b86fd" stroke="#fff" stroke-width="2"/><circle cx="840.2" cy="451.0" r="4.5" fill="#5b86fd" stroke="#fff" stroke-width="2"/><circle cx="925.7" cy="354.6" r="4.5" fill="#5b86fd" stroke="#fff" stroke-width="2"/><circle cx="1008.5" cy="467.0" r="4.5" fill="#5b86fd" stroke="#fff" stroke-width="2"/><circle cx="1094.0" cy="402.8" r="4.5" fill="#5b86fd" stroke="#fff" stroke-width="2"/><circle cx="1179.6" cy="434.9" r="4.5" fill="#5b86fd" stroke="#fff" stroke-width="2"/><circle cx="1256.8" cy="370.7" r="4.5" fill="#5b86fd" stroke="#fff" stroke-width="2"/><circle cx="1342.4" cy="491.1" r="4.5" fill="#5b86fd" stroke="#fff" stroke-width="2"/><circle cx="1425.2" cy="451.0" r="4.5" fill="#5b86fd" stroke="#fff" stroke-width="2"/><circle cx="1510.7" cy="467.0" r="4.5" fill="#5b86fd" stroke="#fff" stroke-width="2"/>
</svg>
<div class="t" style="left:896.8px;top:1967.1px;font-size:16.38px;color:#c3c3cc;font-weight:400;font-family:'Liberation Sans',sans-serif;">Feb &#39;00</div>
<div class="t" style="left:976.8px;top:1967.1px;font-size:16.38px;color:#c3c3cc;font-weight:400;font-family:'Liberation Sans',sans-serif;">Mar &#39;00</div>
<div class="t" style="left:1064.4px;top:1967.1px;font-size:16.38px;color:#c3c3cc;font-weight:400;font-family:'Liberation Sans',sans-serif;">Apr &#39;00</div>
<div class="t" style="left:1143.9px;top:1967.1px;font-size:16.38px;color:#c3c3cc;font-weight:400;font-family:'Liberation Sans',sans-serif;">May &#39;00</div>
<div class="t" style="left:1232.1px;top:1967.1px;font-size:16.38px;color:#c3c3cc;font-weight:400;font-family:'Liberation Sans',sans-serif;">Jun &#39;00</div>
<div class="t" style="left:1317.6px;top:1967.1px;font-size:16.38px;color:#c3c3cc;font-weight:400;font-family:'Liberation Sans',sans-serif;">Jul &#39;00</div>
<div class="t" style="left:1399.3px;top:1967.1px;font-size:16.38px;color:#c3c3cc;font-weight:400;font-family:'Liberation Sans',sans-serif;">Aug &#39;00</div>
<div class="t" style="left:1484.4px;top:1967.1px;font-size:16.38px;color:#c3c3cc;font-weight:400;font-family:'Liberation Sans',sans-serif;">Sep &#39;00</div>
<div class="t" style="left:1569.0px;top:1967.1px;font-size:16.38px;color:#c3c3cc;font-weight:400;font-family:'Liberation Sans',sans-serif;">Oct &#39;00</div>
<div class="t" style="left:1652.5px;top:1967.1px;font-size:16.38px;color:#c3c3cc;font-weight:400;font-family:'Liberation Sans',sans-serif;">Nov &#39;00</div>
<div class="t" style="left:1735.3px;top:1967.1px;font-size:16.38px;color:#c3c3cc;font-weight:400;font-family:'Liberation Sans',sans-serif;">Dec &#39;00</div>
<div class="t" style="left:1830.5px;top:1967.1px;font-size:16.38px;color:#a2a2aa;font-weight:700;font-family:'Liberation Sans',sans-serif;transform:scaleX(0.9782);">2001</div>
<div class="t" style="left:1906.8px;top:1967.1px;font-size:16.38px;color:#c3c3cc;font-weight:400;font-family:'Liberation Sans',sans-serif;">Feb &#39;01</div>
<div class="t" style="left:1984.1px;top:1967.1px;font-size:16.38px;color:#c3c3cc;font-weight:400;font-family:'Liberation Sans',sans-serif;">Mar &#39;01</div>
<div class="t" style="left:2071.7px;top:1967.1px;font-size:16.38px;color:#c3c3cc;font-weight:400;font-family:'Liberation Sans',sans-serif;">Apr &#39;01</div>
<div class="t" style="left:2151.1px;top:1967.1px;font-size:16.38px;color:#c3c3cc;font-weight:400;font-family:'Liberation Sans',sans-serif;">May &#39;01</div>
<div class="t" style="left:2238.6px;top:1967.1px;font-size:16.38px;color:#c3c3cc;font-weight:400;font-family:'Liberation Sans',sans-serif;">Jun &#39;01</div>
<div style="position:absolute;left:2376px;top:1441px;width:1024px;height:635px;border:1.5px solid #dcdcdc;border-radius:14px;background:#fff;box-shadow:0 0 14px rgba(0,0,0,0.06),0 9px 10px rgba(0,0,0,0.08);box-sizing:border-box"></div>
<div style="position:absolute;left:2378px;top:1550px;width:935px;height:2px;background:#e2e2e2"></div>
<div class="t" style="left:2445.2px;top:1480.2px;font-size:36.23px;color:#606060;font-weight:400;font-family:'Liberation Sans',sans-serif;transform:scaleX(0.9587);">Buy fund</div>
<div style="position:absolute;left:2446px;top:1643px;width:954px;height:149px;border:2px solid #e6e6e6;border-radius:16px;background:#fff;box-shadow:0 7px 9px rgba(0,0,0,0.10);box-sizing:border-box"></div>
<div class="t" style="left:2478.8px;top:1677.5px;font-size:25.36px;color:#b8b8b8;font-weight:400;font-family:'Liberation Sans',sans-serif;transform:scaleX(0.9262);">Investment period</div>
<div class="t" style="left:2478.4px;top:1706.5px;font-size:39.42px;color:#474747;font-weight:400;font-family:'Liberation Sans',sans-serif;transform:scaleX(1.0121);">12</div>
<div class="t" style="left:2529.4px;top:1719.1px;font-size:24.64px;color:#474747;font-weight:400;font-family:'Liberation Sans',sans-serif;transform:scaleX(0.9613);">Monthly</div>
<div class="t" style="left:2789.6px;top:1677.5px;font-size:25.36px;color:#b8b8b8;font-weight:400;font-family:'Liberation Sans',sans-serif;transform:scaleX(1.0292);">Dividend period</div>
<div class="t" style="left:2791.4px;top:1714.2px;font-size:42.32px;color:#474747;font-weight:400;font-family:'Liberation Sans',sans-serif;transform:scaleX(0.9171);">Unit Price</div>
<div style="position:absolute;left:3165px;top:1679px;width:235px;height:79px;background:#5f89fd;border-radius:17px"></div>
<div class="t" style="left:3286.2px;top:1704.5px;font-size:33.33px;color:#fff;font-weight:400;font-family:'Liberation Sans',sans-serif;">In</div>
<div style="position:absolute;left:2442px;top:1841px;width:958px;height:149px;border:2px solid #e6e6e6;border-radius:16px;background:#fff;box-shadow:0 7px 9px rgba(0,0,0,0.10);box-sizing:border-box"></div>
<div class="t" style="left:2478.8px;top:1875.5px;font-size:25.36px;color:#b8b8b8;font-weight:400;font-family:'Liberation Sans',sans-serif;transform:scaleX(0.9262);">Investment period</div>
<div class="t" style="left:2478.4px;top:1904.5px;font-size:39.42px;color:#474747;font-weight:400;font-family:'Liberation Sans',sans-serif;transform:scaleX(1.0121);">12</div>
<div class="t" style="left:2529.4px;top:1917.1px;font-size:24.64px;color:#474747;font-weight:400;font-family:'Liberation Sans',sans-serif;transform:scaleX(0.9613);">Monthly</div>
<div class="t" style="left:2789.6px;top:1875.5px;font-size:25.36px;color:#b8b8b8;font-weight:400;font-family:'Liberation Sans',sans-serif;transform:scaleX(1.0292);">Dividend period</div>
<div class="t" style="left:2806.8px;top:1914.3px;font-size:42.03px;color:#474747;font-weight:400;font-family:'Liberation Sans',sans-serif;transform:scaleX(0.9462);">Monthly</div>
<div style="position:absolute;left:3165px;top:1877px;width:235px;height:79px;background:#5f89fd;border-radius:17px"></div>
<div class="t" style="left:3286.2px;top:1902.5px;font-size:33.33px;color:#fff;font-weight:400;font-family:'Liberation Sans',sans-serif;">In</div>
</div></body></html>
